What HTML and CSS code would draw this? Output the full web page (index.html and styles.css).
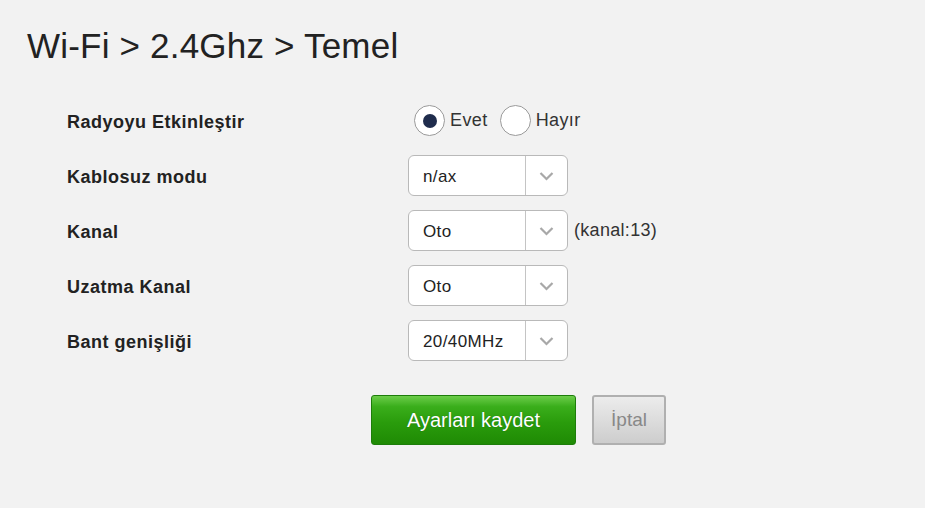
FILE: index.html
```html
<!DOCTYPE html>
<html lang="tr">
<head>
<meta charset="utf-8">
<title>Wi-Fi 2.4Ghz Temel</title>
<link rel="stylesheet" href="styles.css">
</head>
<body>
<main class="page">
  <h1 class="title">Wi-Fi &gt; 2.4Ghz &gt; Temel</h1>
  <div class="form">
    <div class="label">Radyoyu Etkinleştir</div>
    <div class="control radios">
      <label class="radio"><span class="dot on"></span><span>Evet</span></label>
      <label class="radio"><span class="dot"></span><span>Hayır</span></label>
    </div>

    <div class="label">Kablosuz modu</div>
    <div class="control">
      <div class="select"><span class="value">n/ax</span><span class="arrow"><svg width="15" height="10" viewBox="0 0 15 10"><path d="M1.5 2 L7.5 8 L13.5 2" fill="none" stroke="#a8a8a8" stroke-width="2.2"/></svg></span></div>
    </div>

    <div class="label">Kanal</div>
    <div class="control">
      <div class="select"><span class="value">Oto</span><span class="arrow"><svg width="15" height="10" viewBox="0 0 15 10"><path d="M1.5 2 L7.5 8 L13.5 2" fill="none" stroke="#a8a8a8" stroke-width="2.2"/></svg></span></div>
      <span class="note">(kanal:13)</span>
    </div>

    <div class="label">Uzatma Kanal</div>
    <div class="control">
      <div class="select"><span class="value">Oto</span><span class="arrow"><svg width="15" height="10" viewBox="0 0 15 10"><path d="M1.5 2 L7.5 8 L13.5 2" fill="none" stroke="#a8a8a8" stroke-width="2.2"/></svg></span></div>
    </div>

    <div class="label">Bant genişliği</div>
    <div class="control">
      <div class="select"><span class="value">20/40MHz</span><span class="arrow"><svg width="15" height="10" viewBox="0 0 15 10"><path d="M1.5 2 L7.5 8 L13.5 2" fill="none" stroke="#a8a8a8" stroke-width="2.2"/></svg></span></div>
    </div>
  </div>
  <div class="actions">
    <button class="btn save">Ayarları kaydet</button>
    <button class="btn cancel">İptal</button>
  </div>
</main>
</body>
</html>
```
FILE: styles.css
```css
html, body {
  margin: 0;
  padding: 0;
  background: #f2f2f2;
}
body {
  font-family: "Liberation Sans", Arial, sans-serif;
  color: #222;
  width: 925px;
  height: 508px;
  overflow: hidden;
}
.page {
  padding: 26px 0 0 27px;
}
.title {
  margin: 0;
  font-size: 35px;
  line-height: 40px;
  font-weight: normal;
  color: #222;
  letter-spacing: 0.2px;
}
.form {
  display: grid;
  grid-template-columns: 341px auto;
  grid-auto-rows: 41px;
  row-gap: 14px;
  margin: 34px 0 0 40px;
}
.label {
  display: flex;
  align-items: center;
  padding-top: 3px;
  font-weight: bold;
  font-size: 18px;
  letter-spacing: 0.5px;
  color: #222;
}
.control {
  display: flex;
  align-items: center;
}
.radios {
  padding-left: 6px;
  gap: 12px;
}
.radio {
  display: flex;
  align-items: center;
  gap: 5px;
  font-size: 18px;
  letter-spacing: 0.4px;
  color: #333;
}
.dot {
  width: 29px;
  height: 29px;
  border: 1px solid #9a9a9a;
  border-radius: 50%;
  background: #fff;
  display: flex;
  align-items: center;
  justify-content: center;
}
.dot.on::after {
  content: "";
  width: 14px;
  height: 14px;
  border-radius: 50%;
  background: #1f2c4c;
}
.select {
  box-sizing: border-box;
  width: 160px;
  height: 41px;
  border: 1px solid #b9b9b9;
  border-radius: 6px;
  background: #fff;
  display: flex;
  align-items: stretch;
}
.value {
  flex: 1;
  display: flex;
  align-items: center;
  padding: 2px 0 0 14px;
  font-size: 17px;
  letter-spacing: 0.4px;
  color: #222;
}
.arrow {
  width: 41px;
  border-left: 1px solid #c4c4c4;
  display: flex;
  align-items: center;
  justify-content: center;
}
.note {
  margin-left: 6px;
  font-size: 18px;
  letter-spacing: 0.3px;
  color: #333;
}
.actions {
  display: flex;
  gap: 16px;
  margin: 34px 0 0 344px;
}
.btn {
  font-family: "Liberation Sans", Arial, sans-serif;
  height: 50px;
  border-radius: 3px;
  cursor: pointer;
  padding: 0;
}
.save {
  width: 205px;
  font-size: 20px;
  color: #fff;
  border: 1px solid #1d7d0a;
  background: linear-gradient(#6ccd4a 0%, #3aae1b 22%, #2a9c0c 55%, #1f8a04 100%);
  text-shadow: 0 0 1px rgba(0, 60, 0, 0.5);
}
.cancel {
  width: 74px;
  font-size: 19px;
  color: #888;
  border: 2px solid #b0b0b0;
  background: linear-gradient(#ececec, #cdcdcd);
}
```
